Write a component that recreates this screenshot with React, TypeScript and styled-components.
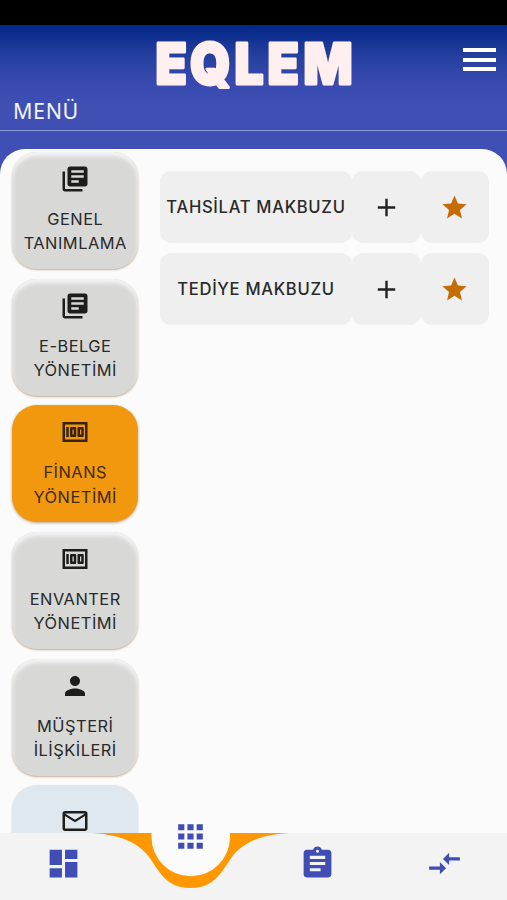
import React from "react";
import styled, { createGlobalStyle } from "styled-components";

const GlobalStyle = createGlobalStyle`
  * { box-sizing: border-box; }
  body { margin: 0; background: #3f4fb4; }
  button { border: 0; padding: 0; margin: 0; background: none; font: inherit; color: inherit; }
`;

const Screen = styled.div`
  width: 507px;
  height: 900px;
  display: flex;
  flex-direction: column;
  overflow: hidden;
  background: #3f4fb4;
  font-family: Inter, "Liberation Sans", sans-serif;
`;

const StatusBar = styled.div`
  height: 25px;
  flex: none;
  background: #000;
`;

const Header = styled.header`
  height: 124px;
  flex: none;
  background: linear-gradient(#04298a 0, #0b2d8e 8px, #26409f 32px, #384ab0 58px, #3f4fb4 80px);
`;

const TopRow = styled.div`
  height: 69px;
  display: grid;
  grid-template-columns: 1fr 200px 1fr;
  align-items: start;
`;

const Logo = styled.svg`
  grid-column: 2;
  width: 200px;
  height: 69px;
  display: block;
  overflow: visible;
`;

const MenuButton = styled.button`
  justify-self: end;
  margin: 23px 11px 0 0;
  width: 33px;
  height: 23px;
  display: flex;
  flex-direction: column;
  justify-content: space-between;
`;

const MenuLine = styled.span`
  display: block;
  width: 33px;
  height: 4px;
  background: #fff;
`;

const Title = styled.h1`
  margin: 0;
  height: 37px;
  padding-left: 13px;
  border-bottom: 1px solid #8d98da;
  color: #f4f5fd;
  font: 400 21.5px/34px "Noto Sans", sans-serif;
  letter-spacing: 0.6px;
`;

const Sheet = styled.main`
  flex: 1;
  min-height: 0;
  display: flex;
  align-items: flex-start;
  background: #fbfbfb;
  border-radius: 25px 25px 0 0;
  overflow: hidden;
`;

const Categories = styled.nav`
  width: 151px;
  flex: none;
  padding: 3px 0 0 12px;
  display: flex;
  flex-direction: column;
  gap: 9.7px;
`;

type Tone = "plain" | "active" | "cool";
const tones: Record<Tone, { bg: string; ink: string; shadow: string }> = {
  plain: {
    bg: "#d8d8d6",
    ink: "#292929",
    shadow: "inset 0 4px 4px #f3f4f5, 0 1px 2px #c4ad90",
  },
  active: { bg: "#f1980f", ink: "#43290a", shadow: "0 1px 3px #b5a58d" },
  cool: { bg: "#e0e8ef", ink: "#20252a", shadow: "0 1px 2px #d8cdbd" },
};

const Category = styled.button<{ $tone: Tone }>`
  width: 126px;
  height: 117px;
  flex: none;
  padding-top: ${(p) => (p.$tone === "cool" ? "21px" : "12px")};
  display: flex;
  flex-direction: column;
  align-items: center;
  border-radius: 25px;
  background: ${(p) => tones[p.$tone].bg};
  color: ${(p) => tones[p.$tone].ink};
  box-shadow: ${(p) => tones[p.$tone].shadow};
`;

const CategoryIcon = styled.svg<{ $tone: Tone }>`
  width: 30px;
  height: 30px;
  flex: none;
  fill: ${(p) => (p.$tone === "active" ? "#38230a" : "#1d1d1b")};
`;

const CategoryLabel = styled.span`
  margin-top: 13px;
  padding-left: 0.5px;
  font-size: 16.4px;
  line-height: 24.4px;
  letter-spacing: 0.5px;
  text-align: center;
  white-space: pre-line;
`;

const Actions = styled.section`
  padding: 22px 0 0 9px;
  display: flex;
  flex-direction: column;
  gap: 10px;
`;

const ActionRow = styled.div`
  display: grid;
  grid-template-columns: 192px 68.5px 68.5px;
  height: 72px;
`;

const ActionCell = styled.button`
  display: flex;
  align-items: center;
  justify-content: center;
  border-radius: 11px;
  background: #efefef;
  color: #2a2a2a;
  font-size: 16.6px;
  font-weight: 450;
  letter-spacing: 0.7px;
  white-space: nowrap;
`;

const CellIcon = styled.svg`
  width: 29px;
  height: 29px;
`;

const BottomBar = styled.footer`
  position: relative;
  height: 67px;
  flex: none;
  display: grid;
  grid-template-columns: 127px 127px 127px 126px;
  background: #f3f3f3;
`;

const Notch = styled.svg`
  position: absolute;
  left: 90px;
  top: -12px;
  width: 201px;
  height: 70px;
`;

const Tab = styled.button<{ $raised?: boolean }>`
  position: relative;
  height: 61px;
  display: flex;
  align-items: center;
  justify-content: center;
  transform: translateY(${(p) => (p.$raised ? "-27px" : "0")});
`;

const TabIcon = styled.svg`
  width: 37px;
  height: 37px;
  fill: #3f4db5;
`;

const glyphs = {
  books:
    "M4 6H2v14c0 1.1.9 2 2 2h14v-2H4V6zm16-4H8c-1.1 0-2 .9-2 2v12c0 1.1.9 2 2 2h12c1.1 0 2-.9 2-2V4c0-1.1-.9-2-2-2zm-1 9H9V9h10v2zm-4 4H9v-2h6v2zm4-8H9V5h10v2z",
  money:
    "M5 8h2v8H5zm7 0H9c-.55 0-1 .45-1 1v6c0 .55.45 1 1 1h3c.55 0 1-.45 1-1V9c0-.55-.45-1-1-1zm-1 6h-1v-4h1v4zm7-6h-3c-.55 0-1 .45-1 1v6c0 .55.45 1 1 1h3c.55 0 1-.45 1-1V9c0-.55-.45-1-1-1zm-1 6h-1v-4h1v4zM2 4v16h20V4H2zm2 14V6h16v12H4z",
  person:
    "M12 12c2.21 0 4-1.79 4-4s-1.79-4-4-4-4 1.79-4 4 1.79 4 4 4zm0 2c-2.67 0-8 1.34-8 4v2h16v-2c0-2.66-5.33-4-8-4z",
  mail: "M22 6c0-1.1-.9-2-2-2H4c-1.1 0-2 .9-2 2v12c0 1.1.9 2 2 2h16c1.1 0 2-.9 2-2V6zm-2 0l-8 5-8-5h16zm0 12H4V8l8 5 8-5v10z",
  add: "M19.2 13H13v6.200h-2V13H4.800v-2H11V4.800h2V11h6.200z",
  star: "M12 17.27L18.18 21l-1.64-7.03L22 9.24l-7.19-.61L12 2 9.19 8.63 2 9.24l5.46 4.73L5.82 21z",
  dashboard: "M3 13h8V3H3v10zm0 8h8v-6H3v6zm10 0h8V11h-8v10zm0-18v6h8V3h-8z",
  apps: "M4 8h4V4H4v4zm6 12h4v-4h-4v4zm-6 0h4v-4H4v4zm0-6h4v-4H4v4zm6 0h4v-4h-4v4zm6-10v4h4V4h-4zm-6 4h4V4h-4v4zm6 6h4v-4h-4v4zm0 6h4v-4h-4v4z",
  assignment:
    "M19 3h-4.18C14.4 1.84 13.3 1 12 1c-1.3 0-2.4.84-2.82 2H5c-1.1 0-2 .9-2 2v14c0 1.1.9 2 2 2h14c1.1 0 2-.9 2-2V5c0-1.1-.9-2-2-2zm-7 0c.55 0 1 .45 1 1s-.45 1-1 1-1-.45-1-1 .45-1 1-1zm2 14H7v-2h7v2zm3-4H7v-2h10v2zm0-4H7V7h10v2z",
  compare: "M9.01 14H2v2h7.01v3L13 15l-3.99-4v3zm5.98-1v-3H22V8h-7.01V5L11 9l3.99 4z",
};

const categories: { icon: keyof typeof glyphs; label: string; tone: Tone }[] = [
  { icon: "books", label: "GENEL\nTANIMLAMA", tone: "plain" },
  { icon: "books", label: "E-BELGE\nYÖNETİMİ", tone: "plain" },
  { icon: "money", label: "FİNANS\nYÖNETİMİ", tone: "active" },
  { icon: "money", label: "ENVANTER\nYÖNETİMİ", tone: "plain" },
  { icon: "person", label: "MÜŞTERİ\nİLİŞKİLERİ", tone: "plain" },
  { icon: "mail", label: "", tone: "cool" },
];

const tabs: { icon: keyof typeof glyphs; raised?: boolean }[] = [
  { icon: "dashboard" },
  { icon: "apps", raised: true },
  { icon: "assignment" },
  { icon: "compare" },
];

export default function App() {
  return (
    <Screen>
      <GlobalStyle />
      <StatusBar />
      <Header>
        <TopRow>
          <Logo viewBox="0 0 200 69">
            <text
              transform="scale(0.9 1)"
              y="59"
              x="1.7 40 89.500 126.200 166"
              fontFamily="Inter"
              fontWeight="900"
              fontSize="57"
              fill="#ffefef"
              stroke="#ffefef"
              strokeWidth="2.8"
              strokeLinejoin="round"
            >
              EQLEM
            </text>
          </Logo>
          <MenuButton aria-label="Menü">
            <MenuLine />
            <MenuLine />
            <MenuLine />
          </MenuButton>
        </TopRow>
        <Title>MENÜ</Title>
      </Header>
      <Sheet>
        <Categories>
          {categories.map((c, i) => (
            <Category key={i} $tone={c.tone}>
              <CategoryIcon $tone={c.tone} viewBox="0 0 24 24">
                <path d={glyphs[c.icon]} />
              </CategoryIcon>
              <CategoryLabel>{c.label}</CategoryLabel>
            </Category>
          ))}
        </Categories>
        <Actions>
          {["TAHSİLAT MAKBUZU", "TEDİYE MAKBUZU"].map((label) => (
            <ActionRow key={label}>
              <ActionCell>{label}</ActionCell>
              <ActionCell>
                <CellIcon viewBox="0 0 24 24" fill="#222">
                  <path d={glyphs.add} />
                </CellIcon>
              </ActionCell>
              <ActionCell>
                <CellIcon viewBox="0 0 24 24" fill="#c56c05">
                  <path d={glyphs.star} />
                </CellIcon>
              </ActionCell>
            </ActionRow>
          ))}
        </Actions>
      </Sheet>
      <BottomBar>
        <Notch viewBox="90 821 201 70">
          <path
            fill="#ff9800"
            d="M92 833H289C256 835 241 845 232 857C221 872 215 888 190.500 888C166 888 160 872 149 857C140 845 125 835 92 833Z"
          />
          <path fill="#fbfbfb" d="M151.500 832.500H230V837A39.250 39.250 0 0 1 151.500 837Z" />
        </Notch>
        {tabs.map((t) => (
          <Tab key={t.icon} $raised={t.raised}>
            <TabIcon viewBox="0 0 24 24">
              <path d={glyphs[t.icon]} />
            </TabIcon>
          </Tab>
        ))}
      </BottomBar>
    </Screen>
  );
}
